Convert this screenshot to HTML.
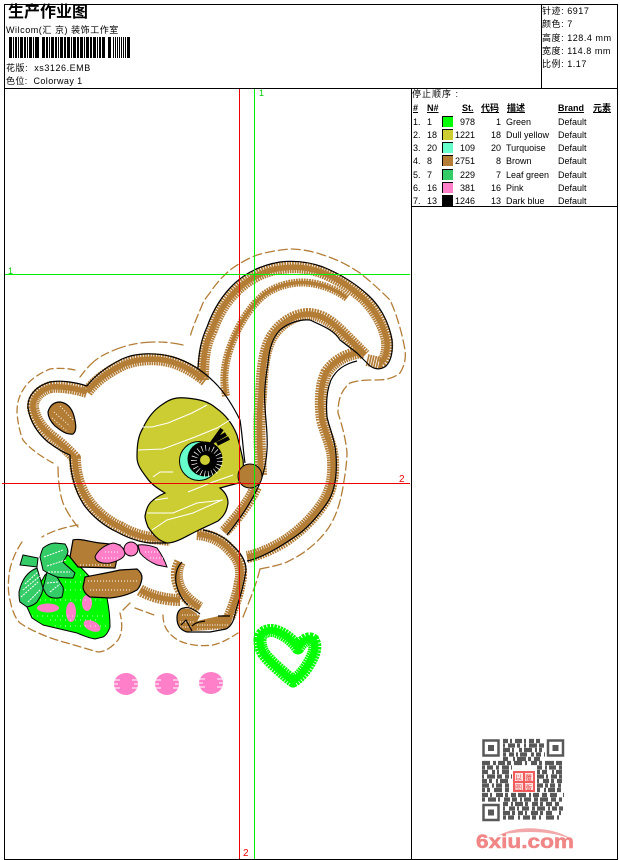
<!DOCTYPE html>
<html><head><meta charset="utf-8">
<style>
html,body{margin:0;padding:0;background:#fff}
#p{position:relative;width:620px;height:860px;overflow:hidden;background:#fff;font-family:"Liberation Sans","WenQuanYi Zen Hei","Noto Sans CJK SC",sans-serif;font-size:9px;color:#000}
#p div{position:absolute;white-space:nowrap;line-height:12px;height:12px}
#p div.w{letter-spacing:.55px}
#p div.h{letter-spacing:.4px}
.b{font-weight:bold;text-decoration:underline}
.r{text-align:right}
.s{width:10px;height:10px!important;border-top:1px solid #000;border-left:1px solid #000}
svg{position:absolute;left:0;top:0}
</style></head><body><div id="p">
<svg width="620" height="860" viewBox="0 0 620 860" fill="none">
<g stroke="#000" stroke-width="1" shape-rendering="crispEdges">
<path d="M4.5 4.5H617.5V859.5H4.5Z"/>
<path d="M4 88.5H618M541.5 4V88M411.5 88V860M411 206.5H618"/>
</g>
<path d="M9 47.5H130" stroke="#000" stroke-width="21" stroke-dasharray="3 1 1 1 2 1 1 1 3 1 2 1 1 1 3 1 1 1 4 3 3 1 2 1 1 1 3 1 2 1 1 1 3 1 2 1 3 1 1 1 3 1 2 1 3 1 1 1 3 1 2 1 3 1 1 1 2 1 3 3 3 2 1 1 1 1 1 1 1 1 1 1 1 1 1 1" shape-rendering="crispEdges"/>
<g stroke="#b37d36" stroke-width="1.3" stroke-linejoin="round" stroke-linecap="round">
<path stroke-dasharray="8 4 14 4" d="M80 377C86 369 92 362 100 357C112 350 126 345 140 343C155 341 170 342 183 345"/>
<path stroke-dasharray="7 4" d="M75 370C66 368 58 368 50 369C38 374 28 381 23 390C18 398 17 405 17 413C18 424 20 433 23 440C30 449 42 457 53 463"/>
<path stroke-dasharray="10 4" d="M58 467C58 480 60 495 63 503C67 512 72 520 78 527"/>
<path stroke-dasharray="8 4" d="M78 525C65 527 52 531 42 537"/>
<path stroke-dasharray="8 4" d="M22 542C15 552 10 565 9 575C8 585 8 592 10 600C12 610 15 618 20 623C30 630 48 638 67 643L98 652C106 652 113 646 118 640C122 634 123 625 120 613"/>
<path d="M123 610L130 603"/>
<path stroke-dasharray="8 4" d="M135 608L157 616"/>
<path stroke-dasharray="7 4" d="M163 615C163 622 165 627 167 630C172 637 178 641 185 643C195 646 205 646 213 645C222 643 230 638 238 633"/>
<path stroke-dasharray="10 4" d="M243 617C247 607 252 595 257 580L260 569"/>
<path stroke-dasharray="9 4" d="M260 569C270 567 280 565 287 562C295 558 302 554 307 550C315 544 322 537 327 530C335 519 340 505 343 487C345 475 347 462 347 453C346 440 342 425 338 413C338 400 341 390 350 383C358 380 368 380 377 380C386 380 394 378 400 373C405 365 406 357 405 350C402 333 397 315 390 300C380 290 370 281 360 273C348 265 336 259 323 255C312 251 300 249 290 249C278 250 267 252 257 255C247 259 238 264 230 270C222 277 215 285 212 290C207 297 204 300 203 303C198 315 193 326 190 337"/>
</g>
<path d="M68 555C75 562 82 568 88 575C96 583 102 590 107 598C109 608 110 618 110 627C108 633 105 636 103 637L95 639C88 638 82 635 77 633L43 625C38 622 35 620 32 618L27 607L45 575Z" fill="#00ff00" stroke="#000"/>
<g fill="#ff80c8"><ellipse cx="48" cy="608" rx="11" ry="4.5"/><ellipse cx="71" cy="612" rx="5" ry="10"/><ellipse cx="87" cy="603" rx="5" ry="8"/><ellipse cx="92" cy="626" rx="9" ry="5" transform="rotate(25 92 626)"/></g>
<g stroke="#fff" stroke-width=".8" stroke-dasharray="1 4"><path d="M45 590H105M40 600H105M32 616H105M60 582H100M55 626H106M80 575H95M50 620H100"/></g>
<g fill="#33cc66" stroke="#000">
<polygon points="20,565 23,555 38,558 37,567"/>
<path d="M37 568C29 571 22 578 19 592C19 597 19 600 20 602L27 607C32 606 35 604 37 602C40 597 43 593 43 588Z"/>
<path d="M43 588C45 593 47 596 50 597C55 599 60 598 62 597C63 593 64 590 63 587L57 577L47 572Z"/>
<path d="M40 557C41 553 42 550 43 548C47 545 51 543 55 543L65 544C67 547 68 549 68 552C67 556 65 559 63 562C67 566 72 570 75 573L73 578C67 578 62 578 57 577C52 575 47 573 43 570Z"/>
</g>
<g stroke="#fff" stroke-width="1" stroke-dasharray="2 1"><path d="M21 597L38 582M23 590L40 576M25 584L38 572M28 602L40 590M50 592L60 584M47 583L58 582M44 557L63 550M47 566L66 560M48 572L70 572"/></g>
<g id="strips" stroke="#b37d36" fill="none" stroke-linejoin="round">
<g stroke-width="12" stroke-dasharray="1.7 .8">
<path id="a" d="M87 392C75 388 60 386 51 387C40 390 32 398 33 408C35 419 41 428 52 437C60 443 67 449 75 458C75 472 79 488 88 501C96 512 108 522 120 527C130 533 142 537 152 538L170 540"/>
<path id="c" d="M87 392C96 380 108 372 122 365C135 359 155 357 172 362C185 366 196 373 206 381"/>
<path id="d" d="M203 380C203 356 205 345 212 330C218 313 226 300 239 288C250 278 265 270 282 268C297 266 310 268 321 272C337 278 352 288 364 299C375 310 384 325 387 341C388 352 385 360 380 363L367 360"/>
<path id="e" d="M261 475C260 450 258 425 261 395C262 375 263 355 270 340C277 326 292 315 307 314C322 314 332 322 345 335L365 355"/>
<path id="f" d="M363 352C345 354 333 362 326 373C320 387 320 405 322 420C326 435 332 445 333 460C334 478 331 492 322 505C310 522 298 532 285 541C272 549 258 555 247 557"/>
<path id="h" d="M256 487C250 500 240 515 224 532"/>
<path id="i" d="M197 534C210 535 222 540 231 551C240 560 243 570 240 582C238 595 234 605 229 618"/>
<path id="j" d="M180 562C176 570 176 578 179 586C182 594 190 602 200 608"/>
<path id="k" d="M140 590C150 596 165 600 180 600"/>
</g>
<g stroke-width="8" stroke-dasharray="1.7 .8"><path id="g" d="M226 396C223 380 224 365 230 348C238 325 250 306 265 294C278 285 295 281 310 283C325 285 338 291 347 298"/></g>
<g stroke-width="5.5">
<path d="M87 392C75 388 60 386 51 387C40 390 32 398 33 408C35 419 41 428 52 437C60 443 67 449 75 458C75 472 79 488 88 501C96 512 108 522 120 527C130 533 142 537 152 538L170 540"/>
<path d="M87 392C96 380 108 372 122 365C135 359 155 357 172 362C185 366 196 373 203 379"/>
<path d="M203 376C203 356 205 345 212 330C218 313 226 300 239 288C250 278 265 270 282 268C297 266 310 268 321 272C337 278 352 288 364 299C375 310 384 325 387 341C388 352 385 360 380 363"/>
<path d="M261 475C260 450 258 425 261 395C262 375 263 355 270 340C277 326 292 315 307 314C322 314 332 322 345 335L365 355"/>
<path d="M363 352C345 354 333 362 326 373C320 387 320 405 322 420C326 435 332 445 333 460C334 478 331 492 322 505C310 522 298 532 285 541C272 549 258 555 247 557"/>
<path d="M256 487C250 500 240 515 224 532"/>
<path d="M197 534C210 535 222 540 231 551C240 560 243 570 240 582C238 595 234 605 229 618"/>
<path d="M180 562C176 570 176 578 179 586C182 594 190 602 200 608"/>
<path d="M140 590C150 596 165 600 180 600"/>
</g>
<path stroke-width="3.5" d="M226 396C223 380 224 365 230 348C238 325 250 306 265 294C278 285 295 281 310 283C325 285 338 291 347 298"/>
</g>
<path d="M177 618C177 610 183 607 190 609L200 616L192 631L187 632C180 630 177 625 177 618Z" fill="#b37d36"/>
<path d="M192 631L226 629C232 626 233 618 232 612C225 616 205 618 195 622Z" fill="#b37d36"/>
<path d="M182 615H198M180 622H194M180 627H192M197 625H228M197 629H225" stroke="#fff" stroke-dasharray="1 1.5"/>
<g stroke="#000" stroke-width="1.2" stroke-linejoin="round">
<path d="M87 386C75 382 60 380 50 382C36 386 27 396 28 408C30 420 36 432 48 442C56 448 62 452 70 455C70 470 74 490 84 505C92 516 104 526 117 532C128 538 140 542 150 543L167 543"/>
<path d="M87 386C96 374 108 366 122 359C135 353 155 352 173 357C190 362 205 372 218 386C228 397 235 410 240 420C243 440 243 450 245 463"/>
<path d="M198 368C199 352 201 340 207 327C213 310 222 295 235 283C247 272 262 265 280 262C297 260 312 263 323 267C340 274 356 284 368 295C380 306 389 322 392 340C393 352 391 361 386 366C380 371 372 369 367 363L357 353L340 340C334 330 323 326 310 320C300 319 288 323 280 330C272 338 269 350 268 363C265 380 264 395 265 407C266 425 268 435 267 450C266 465 263 480 253 497C245 512 235 525 227 535"/>
<path d="M357 361C344 364 336 370 331 380C326 392 326 405 327 417C330 430 335 440 336 455C337 470 336 490 327 503C318 516 308 528 296 536C280 547 262 558 247 561"/>
<path d="M203 530C214 532 225 537 232 545C240 552 246 560 246 570C244 585 240 597 236 610C234 620 232 626 226 629L210 632L187 632C180 630 177 625 177 618C177 612 180 608 184 608C188 606 195 610 200 614"/>
<path d="M182 562C176 568 175 575 176 583C178 592 182 600 188 605"/>
<path d="M181 625L186 620L192 631M192 626C196 622 200 622 205 621M218 616H230"/>
</g>
<path d="M48 412C50 405 54 402 60 402C68 403 72 409 74 416C76 424 77 431 73 434C66 435 60 430 55 426C50 421 48 417 48 412Z" fill="#b37d36" stroke="#000" stroke-width="1.2"/>
<path d="M54 412L70 426M52 418L68 432M60 406L73 420" stroke="#fff" stroke-dasharray="1 2"/>
<path d="M165 493C157 488 151 484 147 478C141 470 137 465 137 457C137 445 138 436 143 428C148 417 155 409 163 404C170 399 176 397 186 398C198 399 208 401 216 408C226 415 233 425 237 435C239 443 241 450 243 460C244 468 243 478 239 483L231 485C227 486 224 487 220 488C225 492 228 497 228 503C227 511 224 516 218 521C210 525 203 528 197 531C188 535 177 543 167 543C158 541 152 533 148 527C146 522 145 519 145 516C146 510 148 505 151 502C155 498 160 495 165 493Z" fill="#cccc33" stroke="#000" stroke-width="1.2"/>
<g stroke="#fff" stroke-width="1" fill="none">
<polyline points="140,427 152,427 168,423 192,413 207,405"/>
<polyline points="138,450 163,449 195,437 217,428 230,420"/>
<polyline points="153,477 160,472 173,472"/>
<polyline points="188,492 213,482 233,475"/>
<polyline points="155,500 168,498"/>
<polyline points="147,513 173,513 197,503 223,500"/>
<polyline points="152,530 167,520 193,513 222,500"/>
</g>
<circle cx="199" cy="461" r="19.5" fill="#66ffcc" stroke="#000"/>
<circle cx="205" cy="459" r="17.5" fill="#000"/>
<circle cx="207" cy="461" r="13" stroke="#fff" stroke-dasharray=".7 3" stroke-width="6" fill="none"/>
<circle cx="205" cy="460" r="7" fill="#000"/>
<circle cx="205" cy="460" r="5" fill="#cccc33"/>
<path d="M209 447L222 429M217 444L229 438M214 441L226 434" stroke="#000" stroke-width="4"/>
<circle cx="250" cy="476" r="12" fill="#b37d36" stroke="#000"/>
<path d="M73 540C80 538 90 542 100 543L120 545L115 568L78 567L70 557Z" fill="#b37d36" stroke="#000" stroke-width="1.2"/>
<path d="M85 577C95 575 107 573 120 570L137 569C141 572 142 575 142 578C141 585 139 588 137 590C130 594 120 597 110 598L90 597C85 594 83 590 83 587Z" fill="#b37d36" stroke="#000" stroke-width="1.2"/>
<path d="M88 581H138M90 590H132M80 565H112" stroke="#fff" stroke-dasharray="1 2"/>
<g fill="#ff80c8" stroke="#000" stroke-width="1">
<path d="M113 543C104 545 97 551 95 557C96 562 102 564 110 563C118 561 125 558 125 553C124 548 120 544 113 543Z"/>
<path d="M138 545C146 544 152 546 157 548C162 555 165 561 167 567L157 565C150 562 144 558 140 553Z"/>
<circle cx="131" cy="549" r="7"/>
</g>
<path d="M105 552H120M102 558H118M145 552H158M150 558H163" stroke="#fff" stroke-dasharray="1 2"/>
<g stroke="#00ff00" stroke-linejoin="round">
<path stroke-width="13" stroke-dasharray="2 .7" d="M260 640C260 633 267 629 275 631C285 634 293 641 298 648C303 640 309 637 313 640C317 647 314 655 308 665C303 673 298 678 293 681C285 675 270 662 264 654C261 649 260 645 260 640Z"/>
<path stroke-width="7" d="M260 640C260 633 267 629 275 631C285 634 293 641 298 648C303 640 309 637 313 640C317 647 314 655 308 665C303 673 298 678 293 681C285 675 270 662 264 654C261 649 260 645 260 640Z"/>
</g>
<g fill="#ff80c8"><ellipse cx="126" cy="684" rx="12" ry="11"/><ellipse cx="167" cy="684" rx="12" ry="11"/><ellipse cx="211" cy="683" rx="12" ry="11"/></g>
<path d="M112 680H120M132 680H140M112 684H118M134 684H140M112 688H120M132 688H140M153 680H161M173 680H181M153 684H159M175 684H181M153 688H161M173 688H181M197 679H205M217 679H225M197 683H203M219 683H225M197 687H205M217 687H225" stroke="#fff"/>
<g stroke-width="1" shape-rendering="crispEdges">
<path d="M239.5 89V859M2 483.5H410" stroke="#ee0000"/>
<path d="M254.5 89V859M5 274.5H410" stroke="#00ee00"/>
</g>
<text x="259" y="96" fill="#00cc00" font-size="9" font-family="Liberation Sans">1</text>
<text x="8" y="274" fill="#00cc00" font-size="9" font-family="Liberation Sans">1</text>
<text x="399" y="482" fill="#ee0000" font-size="10" font-family="Liberation Sans">2</text>
<text x="243" y="856" fill="#ee0000" font-size="10" font-family="Liberation Sans">2</text>
<g stroke="#4a4a4a" fill="none" opacity=".92">
<g stroke-width="2.5">
<rect x="483.5" y="740.5" width="15" height="15"/><rect x="548" y="740.5" width="15" height="15"/><rect x="483.5" y="805" width="15" height="15"/>
</g>
<g fill="#4a4a4a" stroke="none"><rect x="488" y="745" width="6" height="6"/><rect x="552.5" y="745" width="6" height="6"/><rect x="488" y="809.5" width="6" height="6"/></g>
<g stroke-width="4.3">
<path d="M503 741H545" stroke-dasharray="5 2 2 3 7 2 2 3 5 2 4"/>
<path d="M503 745.5H545" stroke-dasharray="2 3 7 2 3 4 2 3 8 2 5"/>
<path d="M503 750H545" stroke-dasharray="7 2 2 5 3 2 8 3 2 2 3"/>
<path d="M503 754.5H545" stroke-dasharray="3 3 5 2 2 2 7 4 3 2 5"/>
<path d="M503 759H545" stroke-dasharray="5 5 2 2 9 2 3 3 6"/>
<path d="M482 763H564" stroke-dasharray="8 3 3 2 7 2 4 3 8 3 2 4 6 2 3 3 9 2 6"/>
<path d="M482 767.5H512" stroke-dasharray="3 2 6 3 3 3 7 2"/>
<path d="M537 767.5H564" stroke-dasharray="5 3 2 2 7 3 3"/>
<path d="M482 772H512" stroke-dasharray="6 4 3 2 2 3 7"/>
<path d="M537 772H564" stroke-dasharray="3 2 5 5 2 2 6"/>
<path d="M482 776.5H512" stroke-dasharray="2 3 8 2 5 3 4"/>
<path d="M537 776.5H564" stroke-dasharray="7 2 2 3 6 2 3"/>
<path d="M482 781H512" stroke-dasharray="5 2 3 4 2 2 8"/>
<path d="M537 781H564" stroke-dasharray="2 4 6 2 3 3 5"/>
<path d="M482 785.5H512" stroke-dasharray="7 3 2 2 6 3 4"/>
<path d="M537 785.5H564" stroke-dasharray="6 2 3 2 5 3 3"/>
<path d="M482 790H512" stroke-dasharray="3 2 3 4 8 3 4"/>
<path d="M537 790H564" stroke-dasharray="3 4 2 2 7 2 4"/>
<path d="M482 795H564" stroke-dasharray="6 2 2 4 7 2 3 3 5 2 8 3 2 2 6 3 5 3 7"/>
<path d="M482 799.5H564" stroke-dasharray="3 3 8 2 2 4 6 2 5 3 2 2 7 3 4 2 8 3 5"/>
<path d="M503 804H564" stroke-dasharray="5 3 2 2 8 2 3 4 6 2 3 3 6 3 4"/>
<path d="M503 808.5H564" stroke-dasharray="2 4 6 2 2 3 7 3 3 2 8 3 2 2 5"/>
<path d="M503 813H564" stroke-dasharray="7 2 3 3 5 2 2 4 7 2 3 3 6"/>
<path d="M503 817.5H564" stroke-dasharray="3 2 6 4 2 3 7 2 4 3 2 5 8"/>
</g></g>
<rect x="513" y="771" width="22" height="21" fill="#f25c5c"/>
<g fill="#fde4e4"><rect x="515" y="773" width="8" height="8"/><rect x="525" y="773" width="8" height="8"/><rect x="515" y="783" width="8" height="7"/><rect x="525" y="783" width="8" height="7"/></g>
<text x="515" y="780" font-size="7" fill="#e84444" font-family="WenQuanYi Zen Hei,Noto Sans CJK SC,sans-serif">以</text>
<text x="525" y="780" font-size="7" fill="#e84444" font-family="WenQuanYi Zen Hei,Noto Sans CJK SC,sans-serif">覆</text>
<text x="515" y="790" font-size="7" fill="#e84444" font-family="WenQuanYi Zen Hei,Noto Sans CJK SC,sans-serif">图</text>
<text x="525" y="790" font-size="7" fill="#e84444" font-family="WenQuanYi Zen Hei,Noto Sans CJK SC,sans-serif">版</text>
<path d="M497 836C510 829 525 827 540 829C552 830 565 834 573 840C560 834 545 832 530 832C518 832 507 833 497 836Z" fill="#f2a8a8"/>
<text x="476" y="848" font-size="19" font-weight="bold" fill="#f08686" stroke="#f08686" stroke-width=".5" font-family="Liberation Sans" textLength="98" lengthAdjust="spacingAndGlyphs">6xiu.com</text>
</svg>
<div style="left:8px;top:4px;font-size:16px;line-height:18px;height:18px;font-weight:bold">生产作业图</div>
<div class="w" style="left:6px;top:24px">Wilcom(汇 京) 装饰工作室</div>
<div class="w" style="left:6px;top:62px">花版: &nbsp;xs3126.EMB</div>
<div class="h" style="left:6px;top:75px">色位: &nbsp;Colorway 1</div>
<div class="w" style="left:542px;top:5px">针迹: 6917</div>
<div class="w" style="left:542px;top:18px">颜色: 7</div>
<div class="w" style="left:542px;top:32px">高度: 128.4 mm</div>
<div class="w" style="left:542px;top:45px">宽度: 114.8 mm</div>
<div class="w" style="left:542px;top:58px">比例: 1.17</div>
<div style="left:412px;top:88px;letter-spacing:1px">停止顺序 :</div>
<div class="b" style="left:413px;top:102px">#</div>
<div class="b" style="left:427px;top:102px">N#</div>
<div class="b" style="left:462px;top:102px">St.</div>
<div class="b" style="left:481px;top:102px">代码</div>
<div class="b" style="left:507px;top:102px">描述</div>
<div class="b" style="left:558px;top:102px">Brand</div>
<div class="b" style="left:593px;top:102px">元素</div>
<div style="left:413px;top:116px">1.</div><div style="left:427px;top:116px">1</div><div class="s" style="left:442px;top:116px;background:#00ff00"></div><div class="r" style="left:455px;top:116px;width:20px">978</div><div class="r" style="left:481px;top:116px;width:20px">1</div><div style="left:506px;top:116px">Green</div><div style="left:558px;top:116px">Default</div>
<div style="left:413px;top:129px">2.</div><div style="left:427px;top:129px">18</div><div class="s" style="left:442px;top:129px;background:#cccc33"></div><div class="r" style="left:455px;top:129px;width:20px">1221</div><div class="r" style="left:481px;top:129px;width:20px">18</div><div style="left:506px;top:129px">Dull yellow</div><div style="left:558px;top:129px">Default</div>
<div style="left:413px;top:142px">3.</div><div style="left:427px;top:142px">20</div><div class="s" style="left:442px;top:142px;background:#66ffcc"></div><div class="r" style="left:455px;top:142px;width:20px">109</div><div class="r" style="left:481px;top:142px;width:20px">20</div><div style="left:506px;top:142px">Turquoise</div><div style="left:558px;top:142px">Default</div>
<div style="left:413px;top:155px">4.</div><div style="left:427px;top:155px">8</div><div class="s" style="left:442px;top:155px;background:#b37d36"></div><div class="r" style="left:455px;top:155px;width:20px">2751</div><div class="r" style="left:481px;top:155px;width:20px">8</div><div style="left:506px;top:155px">Brown</div><div style="left:558px;top:155px">Default</div>
<div style="left:413px;top:169px">5.</div><div style="left:427px;top:169px">7</div><div class="s" style="left:442px;top:169px;background:#33cc66"></div><div class="r" style="left:455px;top:169px;width:20px">229</div><div class="r" style="left:481px;top:169px;width:20px">7</div><div style="left:506px;top:169px">Leaf green</div><div style="left:558px;top:169px">Default</div>
<div style="left:413px;top:182px">6.</div><div style="left:427px;top:182px">16</div><div class="s" style="left:442px;top:182px;background:#ff80c8"></div><div class="r" style="left:455px;top:182px;width:20px">381</div><div class="r" style="left:481px;top:182px;width:20px">16</div><div style="left:506px;top:182px">Pink</div><div style="left:558px;top:182px">Default</div>
<div style="left:413px;top:195px">7.</div><div style="left:427px;top:195px">13</div><div class="s" style="left:442px;top:195px;background:#000"></div><div class="r" style="left:455px;top:195px;width:20px">1246</div><div class="r" style="left:481px;top:195px;width:20px">13</div><div style="left:506px;top:195px">Dark blue</div><div style="left:558px;top:195px">Default</div>
</div></body></html>
